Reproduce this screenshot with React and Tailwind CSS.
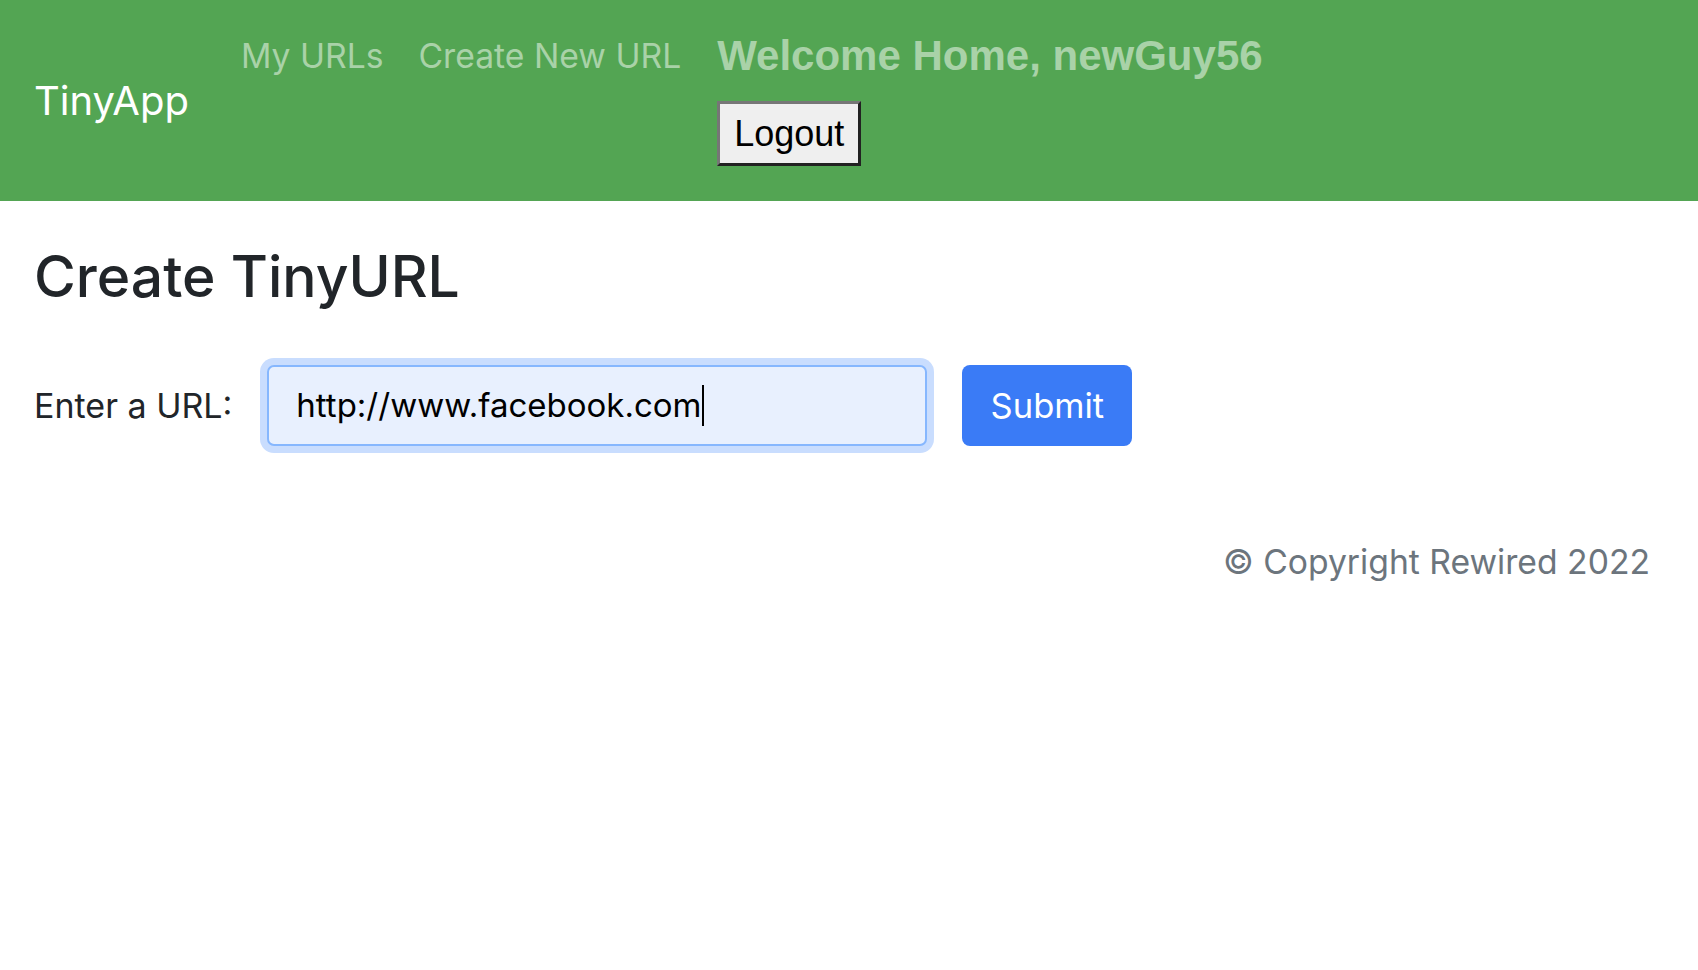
import { useState } from "react";

// fuentes: Inter hace de SF, Liberation Sans hace de Helvetica/Arial
const SF = "font-['Inter',sans-serif]";
const HELV = "font-['Liberation_Sans',Arial,sans-serif]";

const App = () => {
  const [url, setUrl] = useState("http://www.facebook.com");

  return (
    <div className={`min-h-screen bg-white ${SF}`}>
      {/* NAVBAR */}
      <header className="h-[201px] bg-[#53a553] flex items-center pl-[34px]">
        <span className="text-white text-[40px] leading-[48px]">TinyApp</span>

        <div className="self-start flex items-start pt-[31px] ml-[52px]">
          <a className="text-[#a9d2a8] text-[33.7px] leading-[50px]">My URLs</a>
          <a className="text-[#a9d2a8] text-[33.7px] leading-[50px] ml-[35px]">Create New URL</a>

          <div className="ml-[36px]">
            <h3 className={`${HELV} text-[#a9d2a8] text-[42px] leading-[50px] font-bold`}>
              Welcome Home, newGuy56
            </h3>
            <button
              className={`${HELV} mt-[20px] h-[65px] px-[14px] bg-[#efefef] text-black text-[36px] border-[3px] border-t-[#767676] border-l-[#767676] border-b-[#222222] border-r-[#222222]`}
            >
              Logout
            </button>
          </div>
        </div>
      </header>

      {/* CONTENIDO */}
      <main className="px-[34px] pt-[41px]">
        <h1 className="text-[57px] leading-[70px] font-medium text-[#212529]">Create TinyURL</h1>

        <form className="flex items-center mt-[53px]" onSubmit={(e) => e.preventDefault()}>
          <label className="text-[34px] text-[#212529]">Enter a URL:</label>
          <div className="ml-[35px] w-[660px] h-[81px] rounded-[7px] border-2 border-[#86b7fe] bg-[#e8f0fe] ring-[7px] ring-[#c9ddfe] flex items-center pl-[27px]">
            <input
              value={url}
              onChange={(e) => setUrl(e.target.value)}
              className="field-sizing-content bg-transparent outline-none text-[33px] text-black caret-transparent"
            />
            {/* cursor de texto */}
            <span className="w-[2px] h-[41px] bg-black" />
          </div>
          <button className="ml-[35px] w-[170px] h-[81px] rounded-[8px] bg-[#3a7bf6] text-white text-[34.5px]">
            Submit
          </button>
        </form>

        <footer className="flex justify-end pr-[14px] mt-[96px]">
          <p className="text-[33.7px] leading-[40px] text-[#6c757d]">© Copyright Rewired 2022</p>
        </footer>
      </main>
    </div>
  );
};

export default App;
